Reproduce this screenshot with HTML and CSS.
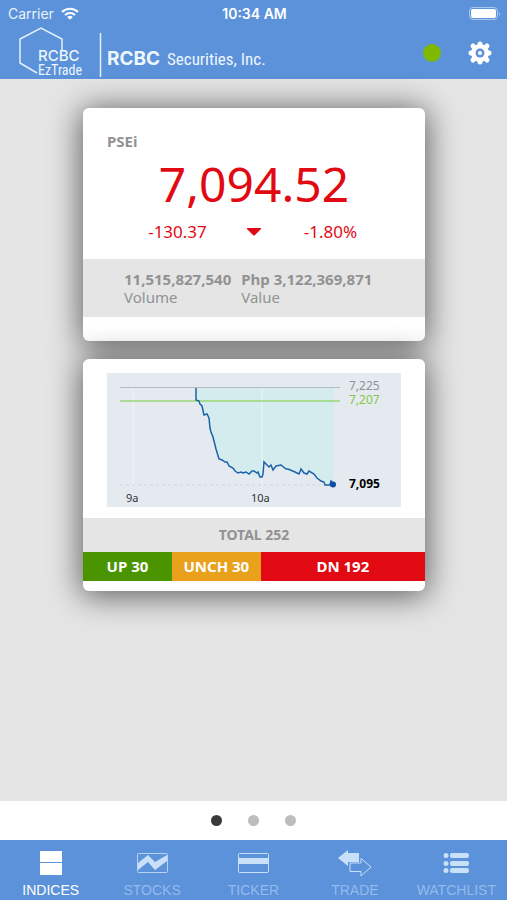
FILE: index.html
```html
<!DOCTYPE html>
<html lang="en">
<head>
  <meta charset="UTF-8" />
  <meta name="viewport" content="width=device-width, initial-scale=1" />
  <title>RCBC EzTrade</title>
  <link rel="stylesheet" href="styles.css">
</head>
<body>
  <header class="header">
    <div class="status-bar">
      <div class="carrier">
        <span>Carrier</span>
        <svg width="18" height="13" viewBox="0 0 18 13" fill="none" stroke="#fff" stroke-width="2">
          <path d="M1 5 A11.5 11.5 0 0 1 17 5" />
          <path d="M4 8 A7.4 7.4 0 0 1 14 8" />
          <path d="M6.200 10 A4 4 0 0 1 11.800 10 L9 12.800 Z" fill="#fff" stroke="none" />
        </svg>
      </div>
      <span class="time">10:34 AM</span>
      <div class="battery">
        <svg width="32" height="14" viewBox="0 0 32 14">
          <rect x="0.5" y="0.5" width="28" height="12" rx="3.500" fill="none" stroke="#a9c8ef" />
          <rect x="2" y="2" width="25" height="9" rx="2" fill="#fff" />
          <path d="M30 5 Q32 7 30 9 Z" fill="#a9c8ef" />
        </svg>
      </div>
    </div>
    <div class="brand-bar">
      <svg class="logo" width="270" height="52" viewBox="0 0 270 52" role="img" aria-label="RCBC Securities, Inc.">
        <path d="M62 24 V12 L41 1 L20 12 V36 L37 46" fill="none" stroke="#e4f0fc" stroke-width="1.500" />
        <text class="logo-mark" x="38" y="34">RCBC</text>
        <text class="logo-narrow" x="38" y="48">EzTrade</text>
        <path d="M100.500 6 V50" stroke="#e4f0fc" stroke-width="1.500" />
        <text class="logo-name" x="107" y="38">RCBC</text>
        <text class="logo-sub" x="167" y="38">Securities, Inc.</text>
      </svg>
      <div class="actions">
        <span class="online"></span>
        <button class="settings" aria-label="Settings">
          <svg width="26" height="26" viewBox="-13 -13 26 26">
            <g stroke="#fff" stroke-width="5" stroke-linecap="round">
              <path d="M0 -9 V9 M-9 0 H9 M-7 -7 L7 7 M-7 7 L7 -7" />
            </g>
            <circle r="9" fill="#fff" />
            <circle r="4.500" fill="#5b92da" />
            <circle r="2" fill="#fff" />
          </svg>
        </button>
      </div>
    </div>
  </header>

  <main class="content">
    <section class="card">
      <h1>PSEi</h1>
      <p class="price">7,094.52</p>
      <div class="change">
        <span>-130.37</span>
        <svg width="16" height="8" viewBox="0 0 16 8"><path d="M1 0 H15 V1 L9 7 Q8 8 7 7 L1 1 Z" fill="#e10a12" /></svg>
        <span>-1.80%</span>
      </div>
      <dl class="totals">
        <div><dt>Volume</dt><dd>11,515,827,540</dd></div>
        <div><dt>Value</dt><dd>Php 3,122,369,871</dd></div>
      </dl>
    </section>

    <section class="card">
      <svg class="chart" viewBox="0 0 294 134">
        <rect width="294" height="134" fill="#e5eaf0" />
        <path d="M89 15 V28 L92 28 L95 34 L97 42 L100 41 L102 45 L104 59 L106 65 L112 86 L119 89 L122 93 L131 100 L154 104 L157 89 L181 97 L205 99 L217 109 L227 111 V15 Z" fill="#d4ecee" />
        <path d="M26 15 V112 M155 15 V112" stroke="#f0f4f7" />
        <path d="M13 14.500 H233" stroke="#b4bcc0" />
        <path d="M13 28 H233" stroke="#9bd675" stroke-width="1.500" />
        <path d="M13 112 H226" stroke="#d3d6da" stroke-dasharray="3 3" />
        <path class="chart-line" d="M89 15 V27 L92 28 L93 31 L95 33 L97 42 L100 41 L102 45 L103 55 L104 59 L106 64 L109 76 L112 86 L115 87 L118 89 L120 89 L122 93 L126 95 L128 98 L131 100 L134 99 L136 100 L139 99 L142 101 L145 98 L147 98 L150 100 L151 99 L153 104 L155 104 L156 101 L157 89 L162 94 L164 92 L166 97 L169 93 L174 92 L179 96 L181 96 L188 99 L192 101 L194 96 L197 100 L200 101 L202 98 L207 101 L210 105 L214 108 L217 109 L218 112 L223 112 L224 108 L227 111" />
        <circle cx="226" cy="111.500" r="3" fill="#0b50a0" />
        <text x="242" y="17" fill="#8e9295">7,225</text>
        <text x="242" y="31" fill="#83c746">7,207</text>
        <text class="last" x="242" y="115">7,095</text>
        <text class="hour" x="19" y="129">9a</text>
        <text class="hour" x="144" y="129">10a</text>
      </svg>
      <p class="total">TOTAL 252</p>
      <div class="breadth">
        <span class="up">UP 30</span>
        <span class="unch">UNCH 30</span>
        <span class="down">DN 192</span>
      </div>
    </section>
  </main>

  <div class="pager">
    <button class="dot active" aria-label="Page 1"></button>
    <button class="dot" aria-label="Page 2"></button>
    <button class="dot" aria-label="Page 3"></button>
  </div>

  <nav class="tabs">
    <a href="#" class="tab active">
      <svg width="36" height="28" viewBox="0 0 36 28" fill="#fff"><rect x="7" y="2" width="22" height="11" /><rect x="7" y="14" width="22" height="12" /></svg>
      <span>INDICES</span>
    </a>
    <a href="#" class="tab">
      <svg width="36" height="28" viewBox="0 0 36 28">
        <rect x="3.500" y="4.500" width="30" height="19" rx="1" fill="none" stroke="#b5d3f3" />
        <path d="M4 14 L14 6 L21 13 L33 6 V12 L21 21 L14 13 L4 21 Z" fill="#c9e1f8" />
      </svg>
      <span>STOCKS</span>
    </a>
    <a href="#" class="tab">
      <svg width="36" height="28" viewBox="0 0 36 28">
        <rect x="3.500" y="4.500" width="30" height="19" rx="1" fill="none" stroke="#c9e1f8" />
        <path d="M4 9 H33 V15 H4 Z" fill="#c9e1f8" />
      </svg>
      <span>TICKER</span>
    </a>
    <a href="#" class="tab">
      <svg width="36" height="28" viewBox="0 0 36 28">
        <path d="M13 14 H24 V9.500 L34 18 L24 27 V22.500 H13 Z" fill="#5b92da" stroke="#c9e1f8" />
        <path d="M1 9 L11 1 V4 H22 V13 H11 V17 Z" fill="#c9e1f8" />
      </svg>
      <span>TRADE</span>
    </a>
    <a href="#" class="tab">
      <svg width="36" height="28" viewBox="0 0 36 28" fill="#c9e1f8">
        <circle cx="8" cy="6.500" r="2.500" /><rect x="12" y="4" width="19" height="5" rx="2" />
        <circle cx="8" cy="14.500" r="2.500" /><rect x="12" y="12" width="19" height="5" rx="2" />
        <circle cx="8" cy="21.500" r="2.500" /><rect x="12" y="19" width="19" height="5" rx="2" />
      </svg>
      <span>WATCHLIST</span>
    </a>
  </nav>
</body>
</html>
```
FILE: styles.css
```css
* { margin: 0; padding: 0; box-sizing: border-box; }
body {
  min-height: 100vh;
  display: flex;
  flex-direction: column;
  font-family: "Noto Sans", "Open Sans", sans-serif;
  font-size: 14px;
  background: #e5e5e5;
}
svg { display: block; }
button {
  border: none;
  background: none;
  cursor: pointer;
}

.header {
  background: #5b92da;
  color: #fff;
}
.status-bar {
  display: grid;
  grid-template-columns: 1fr auto 1fr;
  align-items: center;
  height: 27px;
  padding: 0 6px 0 8px;
  font-family: Inter, sans-serif;
  font-size: 14px;
}
.carrier {
  display: flex;
  align-items: center;
  gap: 7px;
  color: #e8f2fc;
}
.time { font-weight: 600; }
.battery { justify-self: end; }
.brand-bar {
  display: flex;
  justify-content: space-between;
  height: 52px;
}
.logo { fill: #eef6fe; }
.logo-mark { font: 500 15px Inter, sans-serif; }
.logo-narrow { font: 14px "Liberation Sans Narrow", "Roboto Condensed", Roboto, sans-serif; }
.logo-name { font: 700 19px Inter, sans-serif; }
.logo-sub { font: 17px "Liberation Sans Narrow", "Roboto Condensed", Roboto, sans-serif; }
.actions {
  display: flex;
  align-items: center;
  gap: 26px;
  padding-right: 14px;
}
.online {
  width: 18px;
  height: 18px;
  border-radius: 50%;
  background: #7fb800;
}

.content {
  flex: 1;
  display: flex;
  flex-direction: column;
  gap: 18px;
  padding: 29px 82px 29px 83px;
}
.card {
  background: #fff;
  border-radius: 6px;
  box-shadow: 0 3px 32px 2px rgba(0, 0, 0, 0.6);
  overflow: hidden;
}
h1 {
  padding: 22px 24px 0;
  font-size: 15px;
  line-height: 22px;
  color: #929292;
}
.price {
  font-size: 48px;
  line-height: 64px;
  text-align: center;
  color: #e10a12;
}
.change {
  display: grid;
  grid-template-columns: 1fr 16px 1fr;
  align-items: center;
  height: 43px;
  padding: 0 26px 12px;
  font-size: 17px;
  text-align: center;
  color: #e10a12;
}
.totals {
  display: flex;
  gap: 10px;
  margin-bottom: 24px;
  padding: 11px 41px;
  font-size: 15px;
  background: #e5e5e5;
  color: #929292;
}
.totals div {
  display: flex;
  flex-direction: column-reverse;
}
.totals dt, .totals dd { line-height: 18px; }
.totals dd { font-weight: bold; }

.chart {
  width: calc(100% - 48px);
  margin: 14px auto 11px;
  font-size: 12px;
}
.chart-line {
  fill: none;
  stroke: #1a62ab;
  stroke-width: 1.5;
}
.last { font-weight: bold; }
.hour {
  font-size: 11px;
  fill: #333;
}
.total {
  line-height: 34px;
  text-align: center;
  font-weight: bold;
  color: #929292;
  background: #e5e5e5;
}
.breadth {
  display: flex;
  margin-bottom: 10px;
  font-size: 15px;
  line-height: 29px;
  text-align: center;
  font-weight: bold;
  color: #fff;
}
.up { width: 26%; background: #4a9400; }
.unch { width: 26%; background: #e9a11c; }
.down { width: 48%; background: #e10a12; }

.pager {
  display: flex;
  justify-content: center;
  align-items: center;
  gap: 26px;
  height: 39px;
  background: #fff;
}
.dot {
  width: 11px;
  height: 11px;
  border-radius: 50%;
  background: #bdbdbd;
}
.dot.active { background: #3a3a3a; }

.tabs {
  display: grid;
  grid-template-columns: repeat(5, 1fr);
  height: 60px;
  padding-top: 9px;
  background: #5b92da;
}
.tab {
  display: flex;
  flex-direction: column;
  align-items: center;
  gap: 4px;
  font-family: "Liberation Sans", Arial, sans-serif;
  font-size: 14px;
  line-height: 18px;
  text-decoration: none;
  color: #94bbeb;
}
.tab.active { color: #fff; }
```
